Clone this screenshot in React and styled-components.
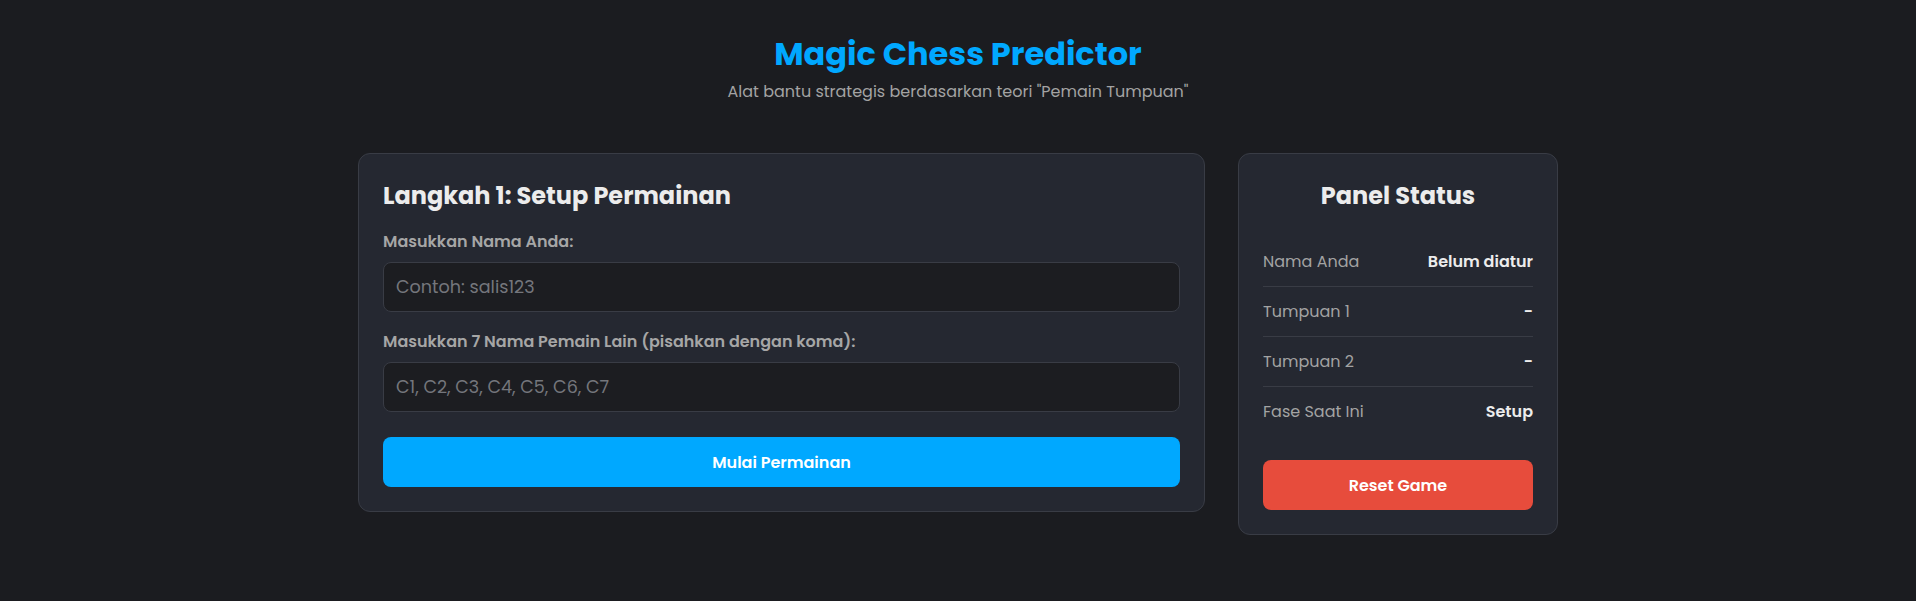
import React, { useState } from 'react';
import styled, { createGlobalStyle } from 'styled-components';

const GlobalStyle = createGlobalStyle`
    * {
        box-sizing: border-box;
    }
    body {
        margin: 0;
        background-color: #1b1c20;
        color: #e6e6e6;
        font-family: "Poppins", "Open Sans", "Noto Sans", sans-serif;
        line-height: 1.5;
    }
`

const Page = styled.div`
    min-height: 100vh;
    padding: 30px 20px 40px;
`
const Header = styled.header`
    text-align: center;
    margin-bottom: 48px;
`
const Title = styled.h1`
    margin: 0;
    font-size: 32px;
    line-height: 48px;
    font-weight: 700;
    color: #00a8ff;
`
const Subtitle = styled.p`
    margin: 0;
    font-size: 16px;
    line-height: 27px;
    color: #a3a3a3;
`
const Layout = styled.main`
    max-width: 1200px;
    margin: 0 auto;
    display: grid;
    grid-template-columns: 1fr 320px;
    gap: 33px;
    align-items: start;
`
const Card = styled.section`
    background-color: #252831;
    border: 1px solid #393c45;
    border-radius: 12px;
    padding: 24px;
`
const CardTitle = styled.h2`
    margin: 0 0 ${props => props.$gap || '17px'};
    font-size: 24px;
    line-height: 36px;
    font-weight: 700;
    color: #ececec;
    text-align: ${props => props.$center ? 'center' : 'left'};
`
const Field = styled.div`
    margin-bottom: 19px;
`
const Label = styled.label`
    display: block;
    margin-bottom: 9px;
    font-size: 16px;
    line-height: 22px;
    font-weight: 600;
    color: #a6a6a6;
`
const Input = styled.input`
    display: block;
    width: 100%;
    height: 50px;
    padding: 0 12px;
    background-color: #1c1d21;
    border: 1px solid #393c45;
    border-radius: 8px;
    color: #e6e6e6;
    font-family: inherit;
    font-size: 17.6px;

    &::placeholder {
        color: #74767c;
    }
    &:focus {
        outline: none;
        border-color: #00a8ff;
    }
`
const Button = styled.button`
    display: block;
    width: 100%;
    height: 50px;
    margin-top: ${props => props.$top || '0'};
    border: none;
    border-radius: 8px;
    background-color: ${props => props.$danger ? '#e74c3c' : '#00a8ff'};
    color: #ffffff;
    font-family: inherit;
    font-size: 16px;
    font-weight: 600;
    cursor: pointer;
`
const StatusList = styled.div`
    display: flex;
    flex-direction: column;
`
const StatusRow = styled.div`
    display: flex;
    justify-content: space-between;
    align-items: center;
    padding: 12px 0;
    line-height: 25px;
    border-bottom: 1px solid #393c45;

    &:last-child {
        border-bottom: none;
    }
`
const StatusKey = styled.span`
    font-size: 16px;
    color: #a3a3a3;
`
const StatusValue = styled.span`
    font-size: 16px;
    font-weight: 600;
    color: #ececec;
`

function App() {
    const [name, setName] = useState('');
    const [others, setOthers] = useState('');

    const status = [
        ['Nama Anda', 'Belum diatur'],
        ['Tumpuan 1', '-'],
        ['Tumpuan 2', '-'],
        ['Fase Saat Ini', 'Setup'],
    ];

    const statusRows = status.map(([key, value]) => {
        return (
            <StatusRow key={key}>
                <StatusKey>{key}</StatusKey>
                <StatusValue>{value}</StatusValue>
            </StatusRow>
        )
    })

    return (
        <>
            <GlobalStyle />
            <Page>
                <Header>
                    <Title>Magic Chess Predictor</Title>
                    <Subtitle>Alat bantu strategis berdasarkan teori "Pemain Tumpuan"</Subtitle>
                </Header>
                <Layout>
                    <Card>
                        <CardTitle>Langkah 1: Setup Permainan</CardTitle>
                        <Field>
                            <Label htmlFor="nama">Masukkan Nama Anda:</Label>
                            <Input id="nama" placeholder="Contoh: salis123" value={name} onChange={e => setName(e.target.value)} />
                        </Field>
                        <Field>
                            <Label htmlFor="lain">Masukkan 7 Nama Pemain Lain (pisahkan dengan koma):</Label>
                            <Input id="lain" placeholder="C1, C2, C3, C4, C5, C6, C7" value={others} onChange={e => setOthers(e.target.value)} />
                        </Field>
                        <Button $top="25px">Mulai Permainan</Button>
                    </Card>
                    <Card>
                        <CardTitle $center $gap="23px">Panel Status</CardTitle>
                        <StatusList>
                            {statusRows}
                        </StatusList>
                        <Button $danger $top="24px">Reset Game</Button>
                    </Card>
                </Layout>
            </Page>
        </>
    )
}

export default App
